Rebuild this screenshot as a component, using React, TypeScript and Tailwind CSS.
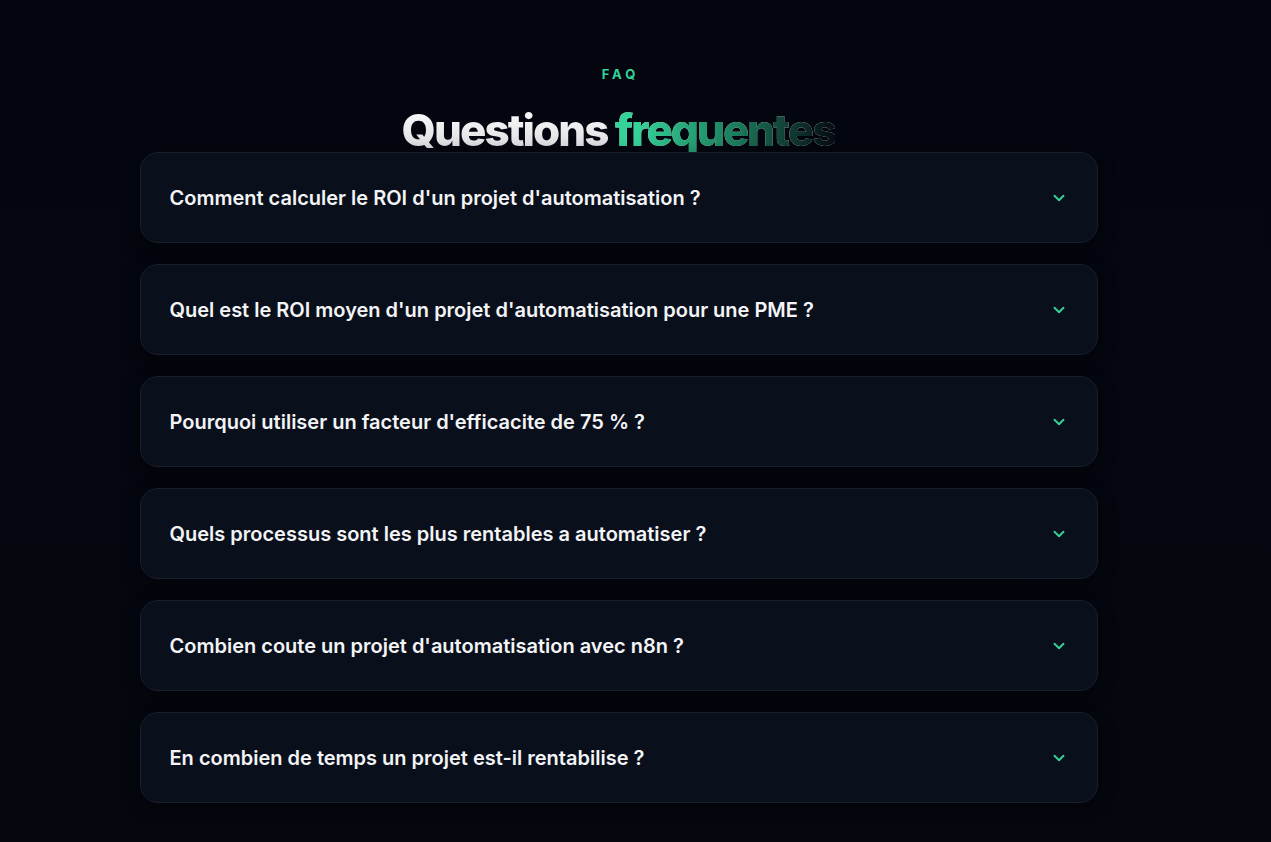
import { ChevronDown } from 'lucide-react'

const questions = [
  "Comment calculer le ROI d'un projet d'automatisation ?",
  "Quel est le ROI moyen d'un projet d'automatisation pour une PME ?",
  "Pourquoi utiliser un facteur d'efficacite de 75 % ?",
  'Quels processus sont les plus rentables a automatiser ?',
  "Combien coute un projet d'automatisation avec n8n ?",
  'En combien de temps un projet est-il rentabilise ?',
]

export default function App() {
  return (
    <div
      className="min-h-screen bg-gradient-to-b from-[#03060f] to-[#05070f] pt-[66px] pb-10 pr-[34px] flex flex-col items-center"
      style={{ fontFamily: 'Inter, "Noto Sans", sans-serif' }}
    >
      <p className="text-[13px] font-bold tracking-[0.3em] pl-[0.3em] text-[#34d399] leading-4">FAQ</p>
      <h2 className="mt-[22px] text-[44px] leading-[52px] font-extrabold tracking-[-0.045em] bg-gradient-to-b from-white to-[#d8d8dc] bg-clip-text text-transparent">
        Questions{' '}
        <span className="bg-gradient-to-r from-[#34d399] from-10% via-[#1a7d5b] via-55% to-[#050c12] bg-clip-text text-transparent">
          frequentes
        </span>
      </h2>
      <div className="relative z-10 -mt-[4px] w-[958px] flex flex-col gap-[21px]">
        {questions.map((q) => (
          <button
            key={q}
            className="h-[91px] w-full rounded-[18px] border border-[#1a1f2d] bg-[#0a0f1c] shadow-[0_4px_18px_rgba(0,0,0,0.45)] pl-[29px] pr-[29px] flex items-center justify-between text-left"
          >
            <span className="text-[20px] font-semibold text-[#f3f4f6]">{q}</span>
            <ChevronDown size={18} strokeWidth={2.5} className="text-[#34d399]" />
          </button>
        ))}
      </div>
    </div>
  )
}
